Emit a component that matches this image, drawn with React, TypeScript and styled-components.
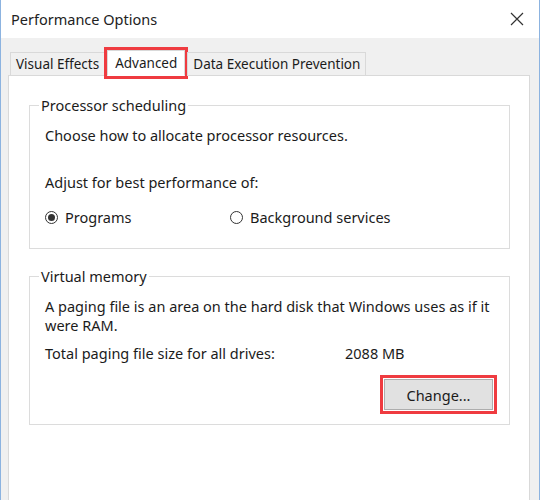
import styled, { createGlobalStyle } from "styled-components";

const GlobalStyle = createGlobalStyle`
  html, body {
    margin: 0;
    padding: 0;
    background: #ffffff;
  }
  body {
    font-family: "Noto Sans", "Open Sans", "DejaVu Sans", sans-serif;
    font-size: 14.5px;
    color: #1b1b1b;
  }
  * {
    box-sizing: border-box;
  }
`;

const Window = styled.div`
  width: 540px;
  height: 500px;
  display: flex;
  flex-direction: column;
  border-left: 1px solid #8cb3e0;
  border-right: 1px solid #8cb3e0;
  overflow: hidden;
`;

const TitleBar = styled.div`
  height: 38px;
  flex: none;
  display: flex;
  align-items: center;
  justify-content: space-between;
  padding: 0 10px 0 10px;
  background: #ffffff;
  font-size: 14.5px;
  color: #222;
`;

const CloseButton = styled.button`
  width: 24px;
  height: 24px;
  padding: 0;
  border: none;
  background: transparent;
  display: flex;
  align-items: center;
  justify-content: center;
`;

const Body = styled.div`
  flex: 1;
  display: flex;
  flex-direction: column;
  background: #f0f0f0;
  padding: 9px 9px 0 7px;
`;

const TabStrip = styled.div`
  display: flex;
  align-items: flex-end;
  height: 29px;
  padding-left: 2px;
  position: relative;
  z-index: 1;
  margin-bottom: -1px;
  font-size: 13.5px;
`;

const Tab = styled.div<{ $active?: boolean }>`
  display: flex;
  align-items: center;
  padding: 0 ${(p) => (p.$active ? "7px" : "5px")};
  height: ${(p) => (p.$active ? "26px" : "24px")};
  margin: 0 ${(p) => (p.$active ? "2px" : "0")};
  background: ${(p) => (p.$active ? "#ffffff" : "#f0f0f0")};
  border: 1px solid #d9d9d9;
  border-bottom: ${(p) => (p.$active ? "1px solid #ffffff" : "1px solid #d9d9d9")};
  outline: ${(p) => (p.$active ? "3px solid #ef3b40" : "none")};
  outline-offset: 0px;
  white-space: nowrap;
`;

const Panel = styled.div`
  flex: 1;
  background: #ffffff;
  border: 1px solid #d9d9d9;
  border-bottom: none;
  padding: 19px 19px 0 20px;
  display: flex;
  flex-direction: column;
  gap: 17px;
`;

const Group = styled.fieldset`
  margin: 0;
  border: 1px solid #dcdcdc;
  padding: 0 15px 0 15px;
  min-width: 0;
`;

const Legend = styled.legend`
  padding: 0 2px;
  margin-left: -6px;
  line-height: 20px;
`;

const Text = styled.p<{ $top: number }>`
  margin: ${(p) => p.$top}px 0 0 0;
  line-height: 19px;
`;

const RadioRow = styled.div`
  display: grid;
  grid-template-columns: 185px auto;
  margin-top: 15px;
  margin-bottom: 21px;
  line-height: 20px;
`;

const RadioOption = styled.label`
  display: flex;
  align-items: center;
  gap: 7px;
`;

const RadioCircle = styled.span<{ $checked?: boolean }>`
  width: 13px;
  height: 13px;
  border-radius: 50%;
  border: 1px solid #333;
  background: #fff;
  display: flex;
  align-items: center;
  justify-content: center;
  &::after {
    content: "";
    width: 7px;
    height: 7px;
    border-radius: 50%;
    background: ${(p) => (p.$checked ? "#333" : "transparent")};
  }
`;

const SizeRow = styled.div`
  display: grid;
  grid-template-columns: 300px auto;
  margin-top: 8px;
  line-height: 20px;
`;

const ButtonRow = styled.div`
  display: flex;
  justify-content: flex-end;
  padding: 16px 1px 14px 0;
`;

const Button = styled.button`
  width: 109px;
  height: 31px;
  font: inherit;
  color: #1b1b1b;
  background: #e1e1e1;
  border: 1px solid #adadad;
  outline: 3px solid #ef3b40;
  outline-offset: 1px;
`;

export default function App() {
  return (
    <>
      <GlobalStyle />
      <Window>
        <TitleBar>
          <span>Performance Options</span>
          <CloseButton aria-label="Close">
            <svg width="14" height="14" viewBox="0 0 14 14">
              <path d="M1 1 L13 13 M13 1 L1 13" stroke="#333" strokeWidth="1.2" />
            </svg>
          </CloseButton>
        </TitleBar>
        <Body>
          <TabStrip>
            <Tab>Visual Effects</Tab>
            <Tab $active>Advanced</Tab>
            <Tab>Data Execution Prevention</Tab>
          </TabStrip>
          <Panel>
            <Group>
              <Legend>Processor scheduling</Legend>
              <Text $top={11}>Choose how to allocate processor resources.</Text>
              <Text $top={28}>Adjust for best performance of:</Text>
              <RadioRow>
                <RadioOption>
                  <RadioCircle $checked />
                  Programs
                </RadioOption>
                <RadioOption>
                  <RadioCircle />
                  Background services
                </RadioOption>
              </RadioRow>
            </Group>
            <Group>
              <Legend>Virtual memory</Legend>
              <Text $top={11}>
                A paging file is an area on the hard disk that Windows uses as if it
                <br />
                were RAM.
              </Text>
              <SizeRow>
                <span>Total paging file size for all drives:</span>
                <span>2088 MB</span>
              </SizeRow>
              <ButtonRow>
                <Button>Change...</Button>
              </ButtonRow>
            </Group>
          </Panel>
        </Body>
      </Window>
    </>
  );
}
